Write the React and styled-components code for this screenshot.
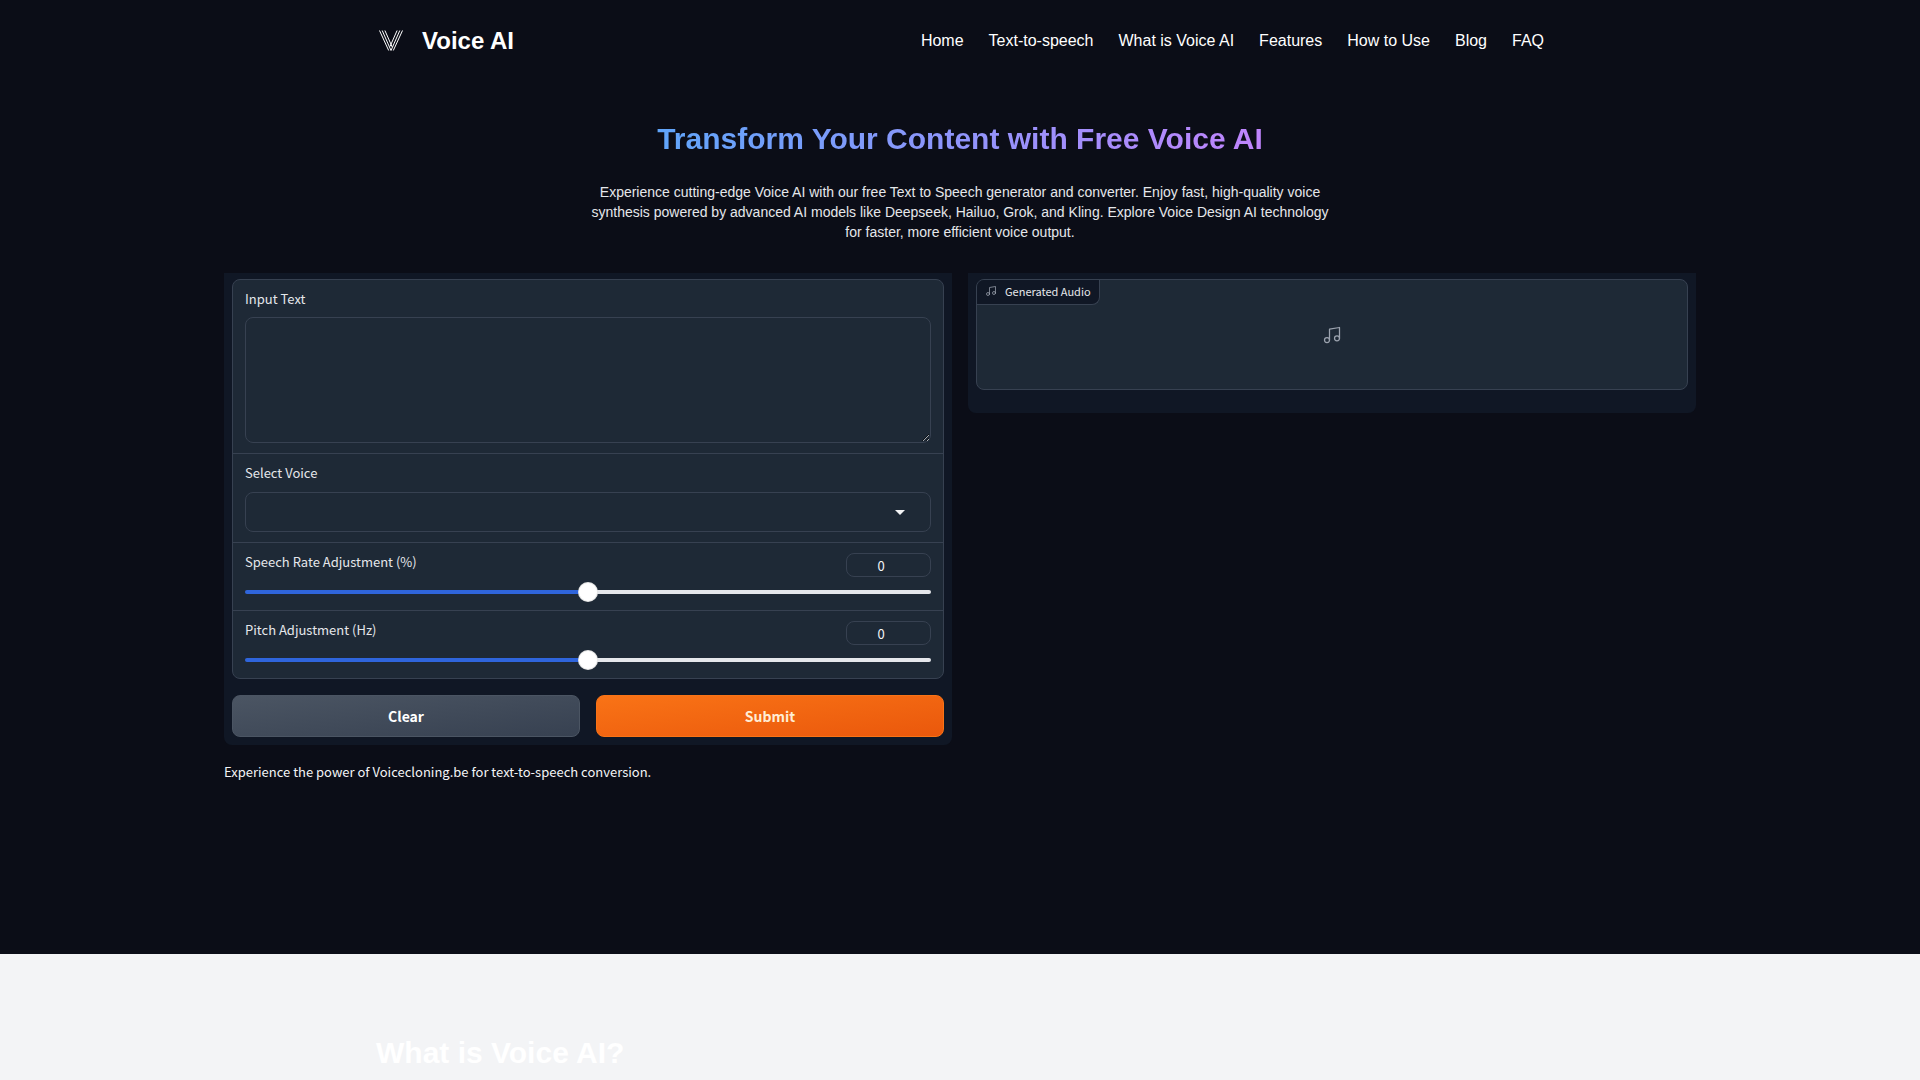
import React, { useState } from "react";
import styled, { createGlobalStyle } from "styled-components";
import { Music } from "lucide-react";

const GlobalStyle = createGlobalStyle`
  * {
    box-sizing: border-box;
  }

  body {
    margin: 0;
    background: #f3f4f6;
    font-family: "Liberation Sans", Arial, sans-serif;
    color: #fff;
    overflow-x: hidden;
  }

  h1, h2, p {
    margin: 0;
  }
`;

const Dark = styled.div`
  background: #0b0d17;
  padding-bottom: 172px;
`;

const Container = styled.div`
  max-width: 1200px;
  margin: 0 auto;
  padding: 0 16px;
`;

const Header = styled(Container)`
  display: flex;
  justify-content: space-between;
  align-items: center;
  height: 82px;
`;

const Logo = styled.a`
  display: flex;
  align-items: center;
  gap: 14px;
  color: #fff;
  font-size: 24px;
  font-weight: 700;
  text-decoration: none;
`;

const Nav = styled.nav`
  display: flex;
  gap: 25px;
`;

const NavLink = styled.a`
  color: #fff;
  font-size: 16px;
  line-height: 24px;
  text-decoration: none;

  &:hover {
    color: #60a5fa;
  }
`;

const Hero = styled.section`
  display: flex;
  flex-direction: column;
  align-items: center;
  padding: 39px 16px 31px;
  text-align: center;
`;

const Title = styled.h1`
  font-size: 30px;
  line-height: 36px;
  font-weight: 700;
  color: transparent;
  background: linear-gradient(to right, #60a5fa, #c084fc);
  background-clip: text;
  -webkit-background-clip: text;
`;

const Lead = styled.p`
  max-width: 756px;
  margin-top: 25px;
  font-size: 14px;
  line-height: 20px;
  color: #e5e7eb;
`;

const Tool = styled.main`
  max-width: 1504px;
  margin: 0 auto;
  padding: 0 16px;
  font-family: "Noto Sans CJK SC", "Noto Sans", sans-serif;
`;

const Columns = styled.div`
  display: grid;
  grid-template-columns: 1fr 1fr;
  align-items: start;
  gap: 16px;

  @media (max-width: 900px) {
    grid-template-columns: 1fr;
  }
`;

const Panel = styled.div`
  padding: 6px 8px ${(props) => props.$bottom || 8}px;
  background: #101725;
  border-radius: 0 0 8px 8px;
`;

const Form = styled.form`
  display: flex;
  flex-direction: column;
  gap: 16px;
`;

const Fields = styled.div`
  background: #1e2936;
  border: 1px solid #374151;
  border-radius: 8px;
`;

const Block = styled.div`
  padding: 10px 12px ${(props) => props.$bottom || 10}px;

  & + & {
    border-top: 1px solid #374151;
  }
`;

const Label = styled.label`
  display: block;
  padding-bottom: 2px;
  font-size: 13px;
  line-height: 17px;
  color: #e5e7eb;
`;

const TextArea = styled.textarea`
  display: block;
  width: 100%;
  height: 126px;
  margin-top: 8px;
  padding: 10px;
  color: #f3f4f6;
  font: inherit;
  font-size: 13px;
  background: #1e2936;
  border: 1px solid #374151;
  border-radius: 8px;
  resize: vertical;
  outline: none;
`;

const SelectWrap = styled.div`
  position: relative;
  margin-top: 9px;

  svg {
    position: absolute;
    right: 26px;
    top: 18px;
    pointer-events: none;
  }
`;

const Select = styled.select`
  display: block;
  width: 100%;
  height: 40px;
  padding: 0 40px 0 10px;
  color: #f3f4f6;
  font: inherit;
  font-size: 13px;
  background: #1e2936;
  border: 1px solid #374151;
  border-radius: 8px;
  appearance: none;
  outline: none;
`;

const SliderHead = styled.div`
  display: flex;
  justify-content: space-between;
  align-items: flex-start;
`;

const NumberInput = styled.input`
  width: 85px;
  height: 24px;
  padding: 0 6px;
  color: #f3f4f6;
  font: inherit;
  font-size: 13px;
  line-height: 20px;
  text-align: center;
  background: #1e2936;
  border: 1px solid #374151;
  border-radius: 8px;
  outline: none;
`;

const Range = styled.input`
  display: block;
  width: 100%;
  height: 20px;
  margin: 5px 0 0;
  background: transparent;
  appearance: none;
  cursor: pointer;

  &::-webkit-slider-runnable-track {
    height: 4px;
    border-radius: 2px;
    background: linear-gradient(
      to right,
      #2f65dc ${(props) => props.$fill}%,
      #e5e7eb ${(props) => props.$fill}%
    );
  }

  &::-webkit-slider-thumb {
    width: 20px;
    height: 20px;
    margin-top: -8px;
    border-radius: 50%;
    background: #fff;
    box-shadow: inset 0 0 0 1px rgba(0, 0, 0, 0.1);
    appearance: none;
  }
`;

const Actions = styled.div`
  display: grid;
  grid-template-columns: 1fr 1fr;
  gap: 16px;
`;

const Button = styled.button`
  height: 42px;
  font: inherit;
  font-size: 14px;
  font-weight: 700;
  color: ${(props) => (props.$primary ? "#ffedd5" : "#fff")};
  background: ${(props) =>
    props.$primary
      ? "linear-gradient(to bottom right, #f97316, #ea580c)"
      : "linear-gradient(to bottom right, #4b5563, #374151)"};
  border: 1px solid ${(props) => (props.$primary ? "#f97316" : "#4b5563")};
  border-radius: 8px;
  cursor: pointer;
`;

const AudioBox = styled.div`
  position: relative;
  display: flex;
  justify-content: center;
  align-items: center;
  height: 111px;
  color: #9ca3af;
  background: #1e2936;
  border: 1px solid #374151;
  border-radius: 8px;
`;

const AudioLabel = styled.div`
  position: absolute;
  top: 0;
  left: 0;
  display: flex;
  align-items: center;
  gap: 8px;
  height: 25px;
  padding: 0 8px 2px;
  font-size: 11px;
  color: #e5e7eb;
  background: #101725;
  border: solid #374151;
  border-width: 0 1px 1px 0;
  border-radius: 7px 0 8px 0;

  svg {
    color: #9ca3af;
  }
`;

const Note = styled.p`
  margin-top: 16px;
  font-size: 13px;
  line-height: 21px;
  color: #f3f4f6;
`;

const About = styled.section`
  padding: 80px 0;
`;

const AboutTitle = styled.h2`
  font-size: 30px;
  line-height: 38px;
  font-weight: 700;
  color: #fff;
`;

const links = [
  { title: "Home", href: "#home" },
  { title: "Text-to-speech", href: "#text-to-speech" },
  { title: "What is Voice AI", href: "#about" },
  { title: "Features", href: "#features" },
  { title: "How to Use", href: "#how-to-use" },
  { title: "Blog", href: "#blog" },
  { title: "FAQ", href: "#faq" },
];

const LogoMark = () => (
  <svg width="32" height="32" viewBox="0 0 32 32" fill="none" stroke="#fff" strokeWidth="1">
    <path d="M3.5 5.5 12.7 25.5M6.2 5.5 15 25.5M8.9 5.5 16.2 22" />
    <path d="M26.5 5.5 17.3 25.5M23.8 5.5 15 25.5M21.1 5.5 14 21.5" />
  </svg>
);

const SliderField = ({ id, label }) => {
  const [value, setValue] = useState(0);
  const onChange = (e) => setValue(Number(e.target.value));

  return (
    <Block $bottom={8}>
      <SliderHead>
        <Label htmlFor={id}>{label}</Label>
        <NumberInput
          type="number"
          aria-label={label}
          min="-50"
          max="50"
          value={value}
          onChange={onChange}
        />
      </SliderHead>
      <Range
        type="range"
        id={id}
        min="-50"
        max="50"
        value={value}
        onChange={onChange}
        $fill={value + 50}
      />
    </Block>
  );
};

const App = () => {
  return (
    <>
      <GlobalStyle />
      <Dark id="home">
        <Header as="header">
          <Logo href="#home">
            <LogoMark />
            <span>Voice AI</span>
          </Logo>
          <Nav>
            {links.map((item) => (
              <NavLink href={item.href} key={item.title}>
                {item.title}
              </NavLink>
            ))}
          </Nav>
        </Header>
        <Hero>
          <Title>Transform Your Content with Free Voice AI</Title>
          <Lead>
            Experience cutting-edge Voice AI with our free Text to Speech generator and
            converter. Enjoy fast, high-quality voice synthesis powered by advanced AI
            models like Deepseek, Hailuo, Grok, and Kling. Explore Voice Design AI
            technology for faster, more efficient voice output.
          </Lead>
        </Hero>
        <Tool id="text-to-speech">
          <Columns>
            <Panel>
              <Form onSubmit={(e) => e.preventDefault()}>
                <Fields>
                  <Block>
                    <Label htmlFor="text">Input Text</Label>
                    <TextArea id="text" />
                  </Block>
                  <Block>
                    <Label htmlFor="voice">Select Voice</Label>
                    <SelectWrap>
                      <Select id="voice">
                        <option value=""></option>
                      </Select>
                      <svg width="10" height="5" viewBox="0 0 10 5" fill="#f3f4f6">
                        <path d="M0 0h10L5 5z" />
                      </svg>
                    </SelectWrap>
                  </Block>
                  <SliderField id="rate" label="Speech Rate Adjustment (%)" />
                  <SliderField id="pitch" label="Pitch Adjustment (Hz)" />
                </Fields>
                <Actions>
                  <Button type="reset">Clear</Button>
                  <Button type="submit" $primary>
                    Submit
                  </Button>
                </Actions>
              </Form>
            </Panel>
            <Panel $bottom={23}>
              <AudioBox>
                <AudioLabel>
                  <Music size={12} strokeWidth={1.5} />
                  Generated Audio
                </AudioLabel>
                <Music size={20} strokeWidth={1.5} />
              </AudioBox>
            </Panel>
          </Columns>
          <Note>Experience the power of Voicecloning.be for text-to-speech conversion.</Note>
        </Tool>
      </Dark>
      <About id="about">
        <Container>
          <AboutTitle>What is Voice AI?</AboutTitle>
        </Container>
      </About>
    </>
  );
};

export default App;
